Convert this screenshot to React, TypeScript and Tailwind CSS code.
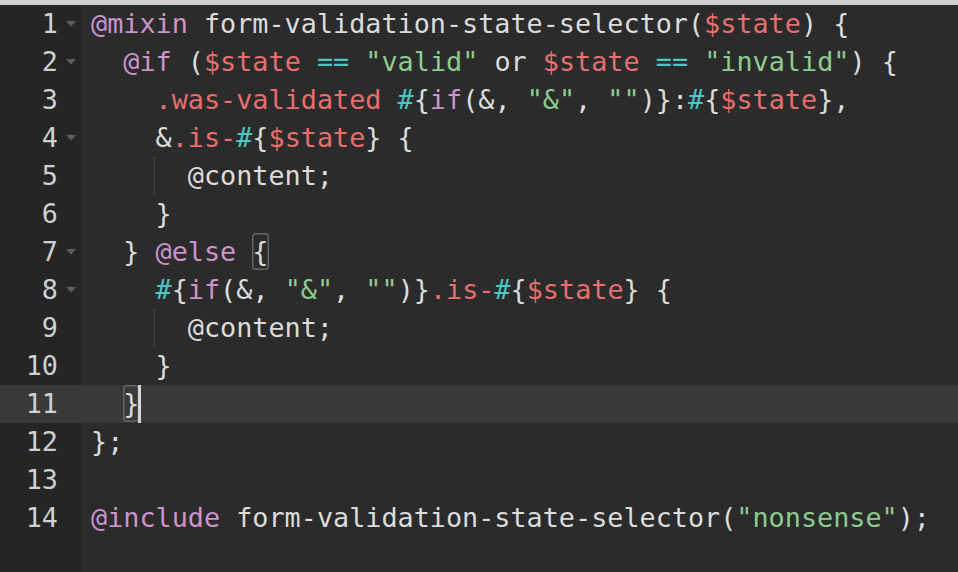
// Dark code editor view: SCSS mixin with gutter, fold arrows, bracket match and cursor.

type Tok = [string, string?];

const KW = "text-[#cc94cc]";
const VAR = "text-[#e66f6f]";
const OP = "text-[#4cc6c6]";
const STR = "text-[#8fcb8f]";

const LINES: { toks: Tok[]; fold?: boolean; guide?: boolean; box?: string; cursor?: boolean; active?: boolean }[] = [
  {
    fold: true,
    toks: [["@mixin", KW], [" form-validation-state-selector("], ["$state", VAR], [") {"]],
  },
  {
    fold: true,
    toks: [
      ["  "],
      ["@if", KW],
      [" ("],
      ["$state", VAR],
      [" "],
      ["==", OP],
      [" "],
      ['"valid"', STR],
      [" or "],
      ["$state", VAR],
      [" "],
      ["==", OP],
      [" "],
      ['"invalid"', STR],
      [") {"],
    ],
  },
  {
    toks: [
      ["    "],
      [".was-validated", VAR],
      [" "],
      ["#", OP],
      ["{"],
      ["if", KW],
      ["(&, "],
      ['"&"', STR],
      [", "],
      ['""', STR],
      [")}:"],
      ["#", OP],
      ["{"],
      ["$state", VAR],
      ["},"],
    ],
  },
  {
    fold: true,
    toks: [["    &"], [".is-", VAR], ["#", OP], ["{"], ["$state", VAR], ["} {"]],
  },
  { guide: true, toks: [["      @content;"]] },
  { toks: [["    }"]] },
  { fold: true, toks: [["  } "], ["@else", KW], [" "]], box: "{" },
  {
    fold: true,
    toks: [
      ["    "],
      ["#", OP],
      ["{"],
      ["if", KW],
      ["(&, "],
      ['"&"', STR],
      [", "],
      ['""', STR],
      [")}"],
      [".is-", VAR],
      ["#", OP],
      ["{"],
      ["$state", VAR],
      ["} {"],
    ],
  },
  { guide: true, toks: [["      @content;"]] },
  { toks: [["    }"]] },
  { toks: [["  "]], box: "}", cursor: true, active: true },
  { toks: [["};"]] },
  { toks: [] },
  { toks: [["@include", KW], [" form-validation-state-selector("], ['"nonsense"', STR], [");"]] },
];

function FoldArrow() {
  return (
    <svg width="10" height="6" viewBox="0 0 10 6" className="ml-[8px]">
      <path d="M0 0 L10 0 L5 5.5 Z" fill="#5e5e5e" />
    </svg>
  );
}

export default function App() {
  return (
    <div
      className="flex h-[572px] w-[958px] flex-col overflow-hidden bg-[#2b2b2b] text-[26.8px] leading-[38px] text-[#dcdcdc]"
      style={{ fontFamily: '"DejaVu Sans Mono", "Liberation Mono", monospace' }}
    >
      <div className="h-[5px] shrink-0 bg-[#cfcfcf]" />
      <div className="flex flex-1 flex-col">
        {LINES.map((ln, i) => (
          <div key={i} className={`flex h-[38px] shrink-0 ${ln.active ? "bg-[#393939]" : ""}`}>
            <div
              className={`flex w-[82px] shrink-0 items-center ${ln.active ? "bg-[#393939]" : "bg-[#252525]"}`}
            >
              <span className="w-[58px] text-right text-[#d0d0d0]">{i + 1}</span>
              {ln.fold ? <FoldArrow /> : null}
            </div>
            <div className="relative flex-1 whitespace-pre pl-[9px]">
              {ln.guide ? (
                <span className="absolute left-[72px] top-0 h-[38px] border-l border-dotted border-[#5a5a5a]" />
              ) : null}
              {ln.toks.map(([t, c], j) => (
                <span key={j} className={c}>
                  {t}
                </span>
              ))}
              {ln.box ? (
                <span className="inline-block h-[37px] rounded-[4px] align-top leading-[37px] shadow-[inset_0_0_0_1.5px_#646464]">
                  {ln.box}
                </span>
              ) : null}
              {ln.cursor ? (
                <span className="-ml-[1px] inline-block h-[38px] w-[3px] align-top bg-[#d6d6d6]" />
              ) : null}
            </div>
          </div>
        ))}
        {/* empty space below the last line: gutter keeps going */}
        <div className="flex flex-1">
          <div className="w-[82px] shrink-0 bg-[#252525]" />
        </div>
      </div>
    </div>
  );
}
